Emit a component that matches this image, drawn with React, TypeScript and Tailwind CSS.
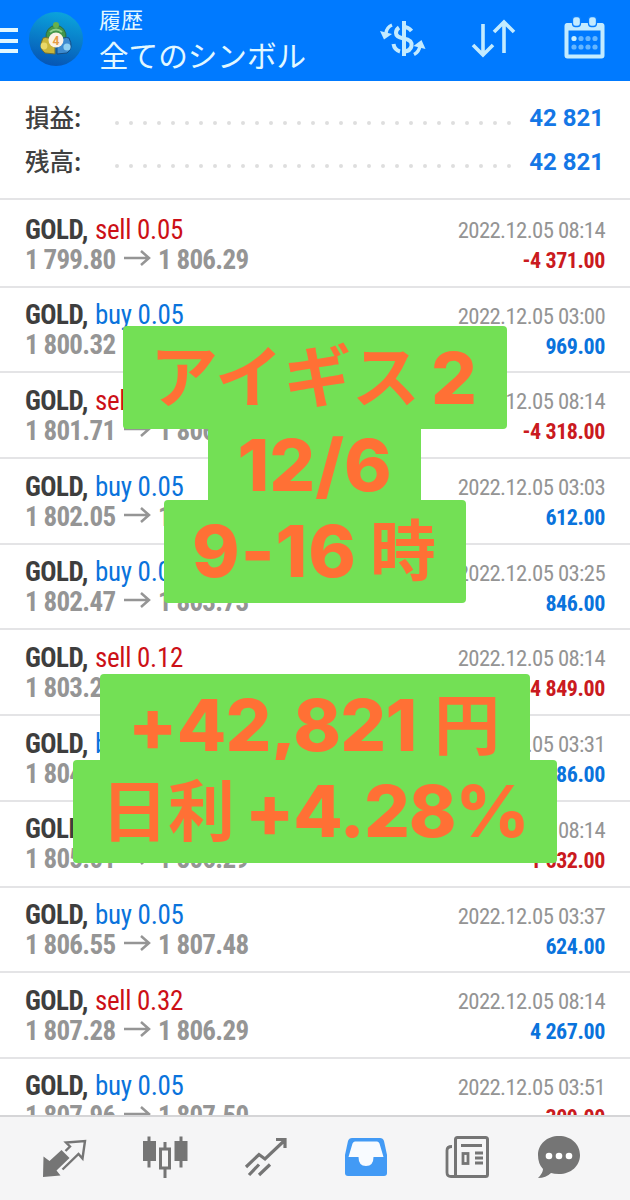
const rows = [
  ["sell 0.05", "1 799.80", "1 806.29", "08:14", "-4 371.00"],
  ["buy 0.05", "1 800.32", "1 801.76", "03:00", "969.00"],
  ["sell 0.07", "1 801.71", "1 806.29", "08:14", "-4 318.00"],
  ["buy 0.05", "1 802.05", "1 802.96", "03:03", "612.00"],
  ["buy 0.05", "1 802.47", "1 803.73", "03:25", "846.00"],
  ["sell 0.12", "1 803.29", "1 806.29", "08:14", "-4 849.00"],
  ["buy 0.05", "1 804.20", "1 805.07", "03:31", "586.00"],
  ["sell 0.10", "1 805.01", "1 806.29", "08:14", "-1 632.00"],
  ["buy 0.05", "1 806.55", "1 807.48", "03:37", "624.00"],
  ["sell 0.32", "1 807.28", "1 806.29", "08:14", "4 267.00"],
  ["buy 0.05", "1 807.96", "1 807.50", "03:51", "-309.00"],
];

const Header = () => (
  <header className="flex h-[81px] shrink-0 items-center bg-[#007aff] text-[#e2f8ff]">
    <div className="flex w-[18px] flex-col gap-[6.5px]">
      <div className="h-1 bg-[#e2f8ff]" />
      <div className="h-1 bg-[#e2f8ff]" />
      <div className="h-1 bg-[#e2f8ff]" />
    </div>
    <svg className="ml-[10px] mt-[-3px] size-[56px]" viewBox="0 0 56 56">
      <defs>
        <linearGradient id="disc" x1="0.6" y1="0" x2="0.4" y2="1">
          <stop offset="0" stopColor="#0ba4dc" />
          <stop offset="1" stopColor="#0655b5" />
        </linearGradient>
      </defs>
      <circle cx="28" cy="28" r="27" fill="url(#disc)" />
      <path d="M18 28q-1-12 10-14 11 2 10 14l-4 4H22z" fill="#43954a" stroke="#286c47" />
      <path d="M22 21q6-5 12 0" fill="none" stroke="#8fd08a" strokeWidth="2" />
      <circle cx="28" cy="14" r="3" fill="#68b04b" />
      <path d="M15 27q-5 10 2 15l10 1v-8l-6-8q-4-1-6 0z" fill="#c9b63c" stroke="#6f6f38" />
      <circle cx="16" cy="35" r="3.4" fill="#ead868" />
      <path d="M41 27q5 10-2 15l-10 1v-8l6-8q4-1 6 0z" fill="#3d8bd0" stroke="#164d81" />
      <circle cx="39" cy="36" r="3.6" fill="#8fd0f2" />
      <circle cx="28" cy="29" r="7.5" fill="#fbf2e6" />
      <text x="28" y="33.500" textAnchor="middle" fontFamily="Roboto" fontSize="12" fontWeight="700" fill="#e49b43">4</text>
    </svg>
    <div className="ml-[15px] flex h-full flex-1 flex-col font-['Noto_Sans_CJK_JP',sans-serif]">
      <div className="mt-[6px] h-[24px] text-[22px] leading-[24px]">履歴</div>
      <div className="mt-[8px] text-[29.6px] leading-[34px] whitespace-nowrap">全てのシンボル</div>
    </div>
    <svg className="h-[81px] w-[270px]" viewBox="360 0 270 81" fill="none" stroke="#c3ebff">
      <path d="M411.500 31q-3-4-8-4M399 27.500q-3 2-3 5.500 0 4 7.500 5.500 9 1.500 8 7.500-1 5-7.500 5.500M393.500 44q1 6 6.500 7.500" strokeWidth="4" />
      <path d="M404 21v35" strokeWidth="4" />
      <path d="M392 25q-5 2-6 8" strokeWidth="3.500" />
      <path d="M380 31l12 3-8 5.500z" fill="#c3ebff" stroke="none" />
      <path d="M425.500 49l-4-9-8 6z" fill="#c3ebff" stroke="none" />
      <path d="M420 46q-1 6-6 8.500" strokeWidth="3.500" />
      <path d="M483 24v31M473 45l10 10 10-10M504 53V22M494 32l10-10 10 10" strokeWidth="3.6" />
      <rect x="566.5" y="25" width="36" height="31.5" rx="1" strokeWidth="4" />
      <path d="M566 27h37" strokeWidth="7" />
      <g fill="#c3ebff" stroke="#087fff" strokeWidth="1.3">
        <rect x="572.5" y="16.5" width="8" height="10" rx="3" />
        <rect x="588.5" y="16.5" width="8" height="10" rx="3" />
      </g>
      <g fill="#65b6ff" stroke="none">
        {[574, 581, 588, 595].map((x) => (
          <g key={x}>
            <circle cx={x} cy="38.5" r="2.6" fill={x === 574 ? "#c9f0ff" : undefined} />
            <circle cx={x} cy="47" r="2.6" />
          </g>
        ))}
      </g>
    </svg>
  </header>
);

const Total = ({ label }: { label: string }) => (
  <div className="flex h-[43.5px] items-center">
    <div className="w-[89.5px] font-['Noto_Sans_CJK_JP',sans-serif] text-[24.5px] font-medium text-[#404040]">{label}</div>
    <div className="mt-[10px] flex w-[396px] justify-between">
      {Array.from({ length: 29 }, (_, i) => (
        <div key={i} className="size-1 rounded-full bg-[#dedede]" />
      ))}
    </div>
    <div className="mt-px flex-1 text-right text-[24px] font-bold text-[#1577e6]">42 821</div>
  </div>
);

const Row = ({ row }: { row: string[] }) => {
  const [side, open, close, time, profit] = row;
  const sideColor = side.startsWith("sell") ? "text-[#cc1017]" : "text-[#0a73dc]";
  const profitColor = profit.startsWith("-") ? "text-[#ca1a20]" : "text-[#0a73dc]";
  return (
    <div className="flex h-[85.7px] shrink-0 justify-between border-b-2 border-[#e4e4e6] pl-[25px] pr-[25px] whitespace-nowrap [font-stretch:75%]">
      <div className="pt-[12.5px] text-[27px] leading-[30px]">
        <div className="flex">
          <span className="w-[70px] font-bold tracking-[-0.5px] text-[#3e3e3e]">GOLD,</span>
          <span className={"tracking-[-0.3px] " + sideColor}>{side}</span>
        </div>
        <div className="flex font-bold tracking-[-0.7px] text-[#959595]">
          <span className="w-[98.5px]">{open}</span>
          <svg className="mr-[7.5px] mt-[4px] h-[18px] w-[27px]" viewBox="0 0 27 18" fill="none" stroke="currentColor" strokeWidth="2.5">
            <path d="M0 9h25M17 2l8 7-8 7" />
          </svg>
          <span>{close}</span>
        </div>
      </div>
      <div className="flex flex-col items-end pt-[14px] text-[22.7px] leading-[30px]">
        <span className="tracking-[-0.6px] text-[#949494]">2022.12.05 {time}</span>
        <span className={"text-[22px] font-bold tracking-[-0.4px] " + profitColor}>{profit}</span>
      </div>
    </div>
  );
};

const Nav = () => (
  <nav className="h-[85px] shrink-0 border-t-2 border-[#d5d5d7] bg-[#f5f5f6]">
    <svg className="h-[83px] w-[630px]" viewBox="0 1117 630 83" fill="none" stroke="#757575">
      <path d="M43 1177l.5-20.500 6 4.500 12-11 8 8-13 12.500 4 5z" fill="#757575" stroke="none" />
      <path d="M62.500 1169.500l16-15.500 4 4.500 2.500-17.500-19 1.500 4 4-4.500 4.500" strokeWidth="2.4" />
      <g strokeWidth="3">
        <path d="M149 1136.500v31M165 1142v36M181 1136.500v31" />
        <rect x="144.5" y="1142.5" width="10" height="17" fill="#757575" />
        <rect x="160.5" y="1149" width="9" height="19" fill="#f5f5f6" />
        <rect x="176" y="1142.5" width="10" height="17" fill="#757575" />
      </g>
      <path d="M246 1167l13-12.500 6 4.500 20-19M276 1139.500h9v8.500M249 1175l10-10.500M259 1175l11-10.500" strokeWidth="3.200" />
      <path d="M352 1138h28q3 0 4 3l3 14v18q0 3-3 3h-36q-3 0-3-3v-18l3-14q1-3 4-3z" fill="#429af5" stroke="none" />
      <path d="M355 1141.500h22q1.500 0 2.500 2l4 13.500h-10q0 9-7.500 9t-7.500-9h-10l4-13.500q1-2 2.500-2z" fill="#f8fbff" stroke="none" />
      <rect x="455.5" y="1137.500" width="32" height="39" rx="2" strokeWidth="3" />
      <path d="M452 1146.500q-5 0-5 4v22q0 4 4 4h6M461 1145.500h21M475 1153h8M475 1158h8M475 1163h8" strokeWidth="2.8" />
      <rect x="463" y="1153.500" width="5" height="10" strokeWidth="2.8" />
      <path d="M559 1136c12 0 21 8 21 19s-9 19-21 19q-5 0-8-1-5 5-13 5 5-5 5-9-5-5-5-14c0-11 9-19 21-19z" fill="#757575" stroke="none" />
      <g fill="#fff" stroke="none">
        <circle cx="549" cy="1156" r="3.3" />
        <circle cx="559" cy="1156" r="3.3" />
        <circle cx="569" cy="1156" r="3.3" />
      </g>
    </svg>
  </nav>
);

const App = () => (
  <div className="relative flex h-[1200px] w-[630px] flex-col overflow-hidden bg-white font-[Roboto,sans-serif]">
    <Header />
    <div className="h-[119px] shrink-0 border-b-2 border-[#e4e4e6] pl-[25px] pr-[26px] pt-[15px]">
      <Total label="損益:" />
      <Total label="残高:" />
    </div>
    <div className="flex min-h-0 flex-1 flex-col overflow-hidden pt-[2px]">
      {rows.map((row, i) => (
        <Row key={i} row={row} />
      ))}
    </div>
    <Nav />

    {/* caption stickers over the list */}
    <div className="absolute left-0 top-[326px] flex w-full flex-col font-[Inter,'Noto_Sans_CJK_JP',sans-serif] text-[72px] font-extrabold whitespace-nowrap text-[#ff7035]">
      <div className="ml-[123px] flex h-[103px] w-[384px] rounded bg-[#73e055] leading-[103px]">
        <span className="ml-[27px] w-[281px] text-[68px] font-bold tracking-[0.5px]">アイギス</span>
        <span>2</span>
      </div>
      <div className="ml-[208px] h-[71px] w-[213px] bg-[#73e055] pl-[29.5px] leading-[71px]">12/6</div>
      <div className="ml-[164px] flex h-[103px] w-[302px] rounded bg-[#73e055] leading-[103px]">
        <span className="ml-[28px] mt-[-1px] w-[178px] tracking-[1px]">9-16</span>
        <span className="text-[66px] font-bold">時</span>
      </div>
    </div>
    <div className="absolute left-0 top-[674px] flex w-full flex-col font-[Inter,'Noto_Sans_CJK_JP',sans-serif] text-[72px] font-extrabold whitespace-nowrap text-[#ff7035]">
      <div className="ml-[100px] flex h-[90px] w-[430px] rounded-t bg-[#73e055] leading-[103px]">
        <span className="ml-[28px] mt-[-1px] w-[306px] tracking-[-0.7px]">+42,821</span>
        <span className="text-[66px] font-bold">円</span>
      </div>
      <div className="ml-[73px] mt-[-4px] flex h-[103px] w-[484px] rounded bg-[#73e055] leading-[103px]">
        <span className="ml-[28px] w-[144px] text-[67px] font-bold">日利</span>
        <span className="mt-[-1px] tracking-[-1px]">+4.28%</span>
      </div>
    </div>
  </div>
);

export default App;
